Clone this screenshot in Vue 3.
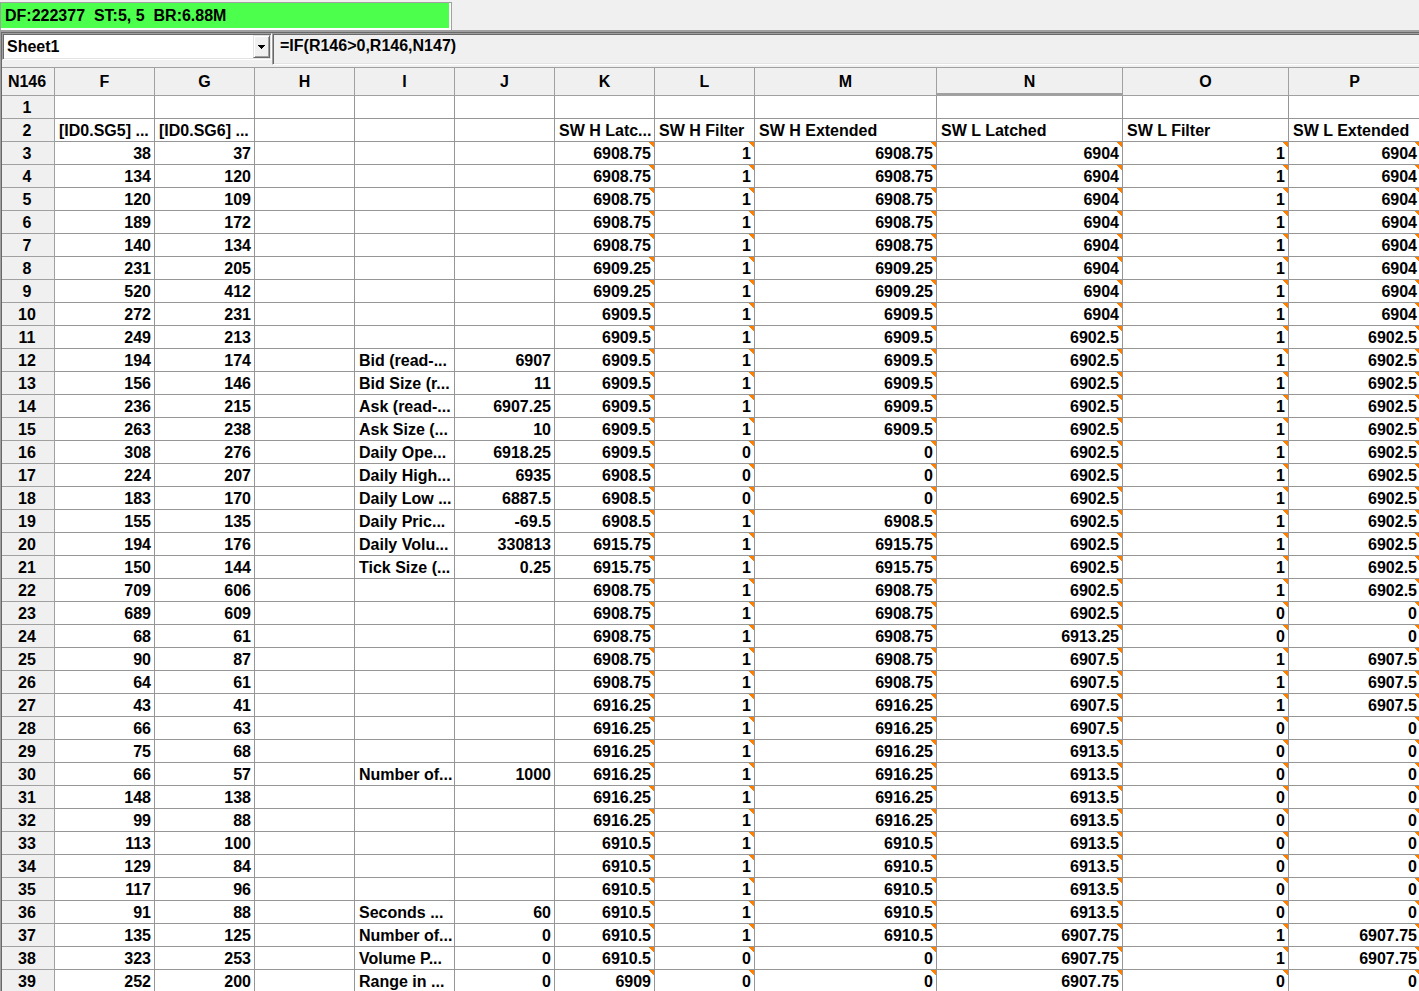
<script setup>
const columns = ['F', 'G', 'H', 'I', 'J', 'K', 'L', 'M', 'N', 'O', 'P']
const active = 'N'

const f = [38, 134, 120, 189, 140, 231, 520, 272, 249, 194, 156, 236, 263, 308, 224, 183, 155, 194, 150, 709, 689, 68, 90, 64, 43, 66, 75, 66, 148, 99, 113, 129, 117, 91, 135, 323, 252]
const g = [37, 120, 109, 172, 134, 205, 412, 231, 213, 174, 146, 215, 238, 276, 207, 170, 135, 176, 144, 606, 609, 61, 87, 61, 41, 63, 68, 57, 138, 88, 100, 84, 96, 88, 125, 253, 200]

const settings = {
  12: ['Bid (read-...', '6907'],
  13: ['Bid Size (r...', '11'],
  14: ['Ask (read-...', '6907.25'],
  15: ['Ask Size (...', '10'],
  16: ['Daily Ope...', '6918.25'],
  17: ['Daily High...', '6935'],
  18: ['Daily Low ...', '6887.5'],
  19: ['Daily Pric...', '-69.5'],
  20: ['Daily Volu...', '330813'],
  21: ['Tick Size (...', '0.25'],
  30: ['Number of...', '1000'],
  36: ['Seconds ...', '60'],
  37: ['Number of...', '0'],
  38: ['Volume P...', '0'],
  39: ['Range in ...', '0'],
}

// Each run is [last row, value]; the value holds from the previous run's end.
const latchedHigh = [[7, 6908.75], [9, 6909.25], [16, 6909.5], [19, 6908.5], [21, 6915.75], [26, 6908.75], [32, 6916.25], [38, 6910.5], [39, 6909]]
const filterHigh = [[15, 1], [18, 0], [37, 1], [39, 0]]
const latchedLow = [[10, 6904], [23, 6902.5], [24, 6913.25], [28, 6907.5], [36, 6913.5], [39, 6907.75]]
const filterLow = [[22, 1], [24, 0], [27, 1], [36, 0], [38, 1], [39, 0]]
const at = (runs, row) => runs.find(([last]) => row <= last)[1]

const titles = ['[ID0.SG5] ...', '[ID0.SG6] ...', '', '', '', 'SW H Latc...', 'SW H Filter', 'SW H Extended', 'SW L Latched', 'SW L Filter', 'SW L Extended']

function buildRow(n) {
  if (n === 1) return columns.map(() => ({ text: '' }))
  if (n === 2) return titles.map((text) => ({ text }))
  const [label, value] = settings[n] || ['', '']
  const kh = at(latchedHigh, n)
  const fh = at(filterHigh, n)
  const kl = at(latchedLow, n)
  const fl = at(filterLow, n)
  return [
    { text: f[n - 3], num: true },
    { text: g[n - 3], num: true },
    { text: '' },
    { text: label },
    { text: value, num: true },
    ...[kh, fh, fh ? kh : 0, kl, fl, fl ? kl : 0].map((text) => ({ text, num: true, computed: true })),
  ]
}

const rows = Array.from({ length: 39 }, (_, i) => ({ n: i + 1, cells: buildRow(i + 1) }))
</script>

<template>
  <main class="window">
    <header class="status-bar">
      <div class="status">DF:222377&nbsp; ST:5, 5&nbsp; BR:6.88M</div>
    </header>
    <div class="body">
      <div class="formula-bar">
        <div class="picker">
          <select class="sheet-select" aria-label="Sheet">
            <option>Sheet1</option>
          </select>
          <span class="drop"><svg width="7" height="4" viewBox="0 0 7 4" shape-rendering="crispEdges"><path d="M0 0H7V1H6V2H5V3H4V4H3V3H2V2H1V1H0Z" /></svg></span>
        </div>
        <input class="formula-input" aria-label="Formula" value="=IF(R146>0,R146,N147)" />
      </div>
      <table class="grid">
        <colgroup>
          <col class="w-row" />
          <col v-for="c in columns" :key="c" :class="'w-' + c.toLowerCase()" />
        </colgroup>
        <thead>
          <tr>
            <th scope="col">N146</th>
            <th v-for="c in columns" :key="c" scope="col" :class="{ active: c === active }">{{ c }}</th>
          </tr>
        </thead>
        <tbody>
          <tr v-for="row in rows" :key="row.n">
            <th scope="row">{{ row.n }}</th>
            <td v-for="(cell, i) in row.cells" :key="i" :class="{ num: cell.num, computed: cell.computed }">{{ cell.text }}</td>
          </tr>
        </tbody>
      </table>
    </div>
  </main>
</template>

<style>
body {
  margin: 0;
  background: #f0f0f0;
}
</style>

<style scoped>
.window {
  box-sizing: border-box;
  height: 100vh;
  overflow: hidden;
  padding-top: 2px;
  display: flex;
  flex-direction: column;
  background: #f0f0f0;
  color: #000;
  font: bold 16px/20px "Liberation Sans", Arial, sans-serif;
}

.status-bar {
  flex: none;
  display: flex;
  border-bottom: 1px solid #a0a0a0;
}

.status {
  box-sizing: border-box;
  width: 452px;
  height: 28px;
  padding: 3px 4px;
  border: solid #a0a0a0;
  border-width: 1px 1px 0 1px;
  box-shadow: inset -2px -2px #fff;
  background: #4dff4d;
  white-space: nowrap;
}

.body {
  flex: 1;
  min-height: 0;
  overflow: hidden;
  padding: 1px 0 0 1px;
  border: solid #a0a0a0;
  border-width: 1px 0 0 1px;
  box-shadow: inset 1px 1px #696969;
}

.formula-bar {
  display: flex;
  height: 34px;
}

.picker {
  position: relative;
  box-sizing: border-box;
  width: 270px;
  height: 27px;
  padding: 1px;
  border: 1px solid;
  border-color: #a0a0a0 #fff #fff #a0a0a0;
  box-shadow: inset 1px 1px #696969, inset -1px -1px #e3e3e3;
}

.sheet-select {
  display: block;
  width: 100%;
  height: 23px;
  padding: 0 20px 0 3px;
  border: 0;
  border-radius: 0;
  appearance: none;
  background: #fff;
  color: inherit;
  font: inherit;
}

.drop {
  position: absolute;
  top: 1px;
  right: 1px;
  box-sizing: border-box;
  width: 17px;
  height: 23px;
  display: flex;
  align-items: center;
  justify-content: center;
  border: 1px solid;
  border-color: #e3e3e3 #696969 #696969 #e3e3e3;
  box-shadow: inset 1px 1px #fff, inset -1px -1px #a0a0a0;
  background: #f0f0f0;
  pointer-events: none;
}

.formula-input {
  flex: 1;
  min-width: 0;
  box-sizing: border-box;
  height: 32px;
  padding: 1px 6px 7px 7px;
  border: solid;
  border-width: 1px 0 1px 1px;
  border-color: #a0a0a0 #fff #fff #a0a0a0;
  box-shadow: inset 1px 1px #696969, inset 0 -1px #e3e3e3;
  background: #f0f0f0;
  color: inherit;
  font: inherit;
}

.grid {
  width: calc(100% + 2px);
  table-layout: fixed;
  border-spacing: 0;
  border-top: 1px solid #a0a0a0;
}

.w-row { width: 53px; }
.w-f, .w-g, .w-h, .w-i, .w-j, .w-k, .w-l { width: 100px; }
.w-m { width: 182px; }
.w-n { width: 186px; }
.w-o { width: 166px; }

th,
td {
  box-sizing: border-box;
  height: 23px;
  padding: 2px 3px 0 4px;
  border: solid #969696;
  border-width: 0 1px 1px 0;
  overflow: hidden;
  white-space: nowrap;
  text-align: left;
}

th {
  padding: 2px 0 0;
  border-color: #a0a0a0;
  background: #f0f0f0;
  text-align: center;
}

th:first-child {
  padding-right: 2px;
}

thead th {
  height: 28px;
  padding-top: 0;
}

th.active {
  box-shadow: inset 0 -2px #a0a0a0;
}

td {
  background: #fff;
}

td.num {
  text-align: right;
}

td.computed {
  background: linear-gradient(45deg, transparent 42%, #ff8000 42%) top right / 5px 5px no-repeat #fff;
}
</style>
